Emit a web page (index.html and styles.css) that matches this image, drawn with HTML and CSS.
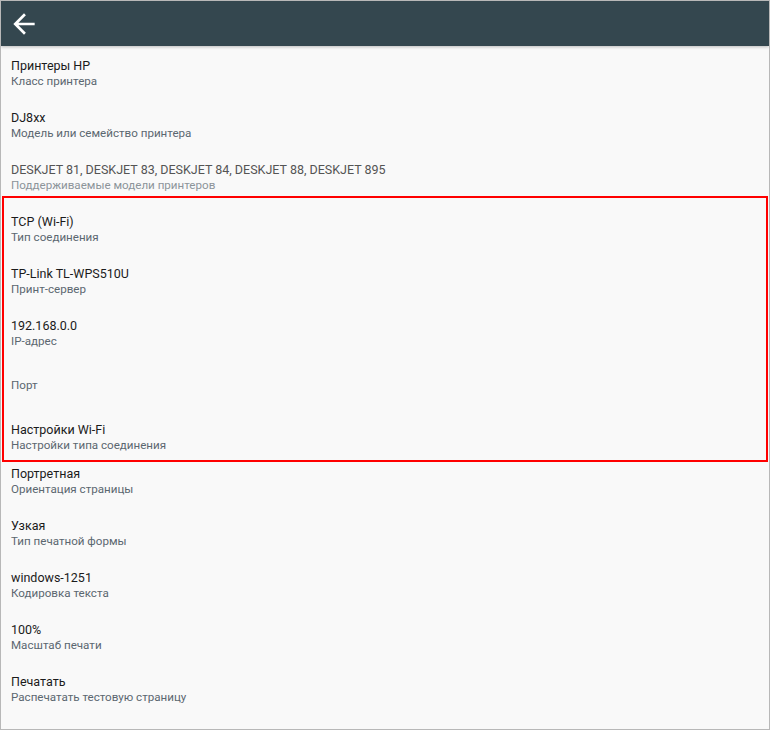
FILE: index.html
```html
<!DOCTYPE html>
<html><head><meta charset="utf-8"><link rel="stylesheet" href="styles.css"></head>
<body>
<div class="frame">
  <header class="bar">
    <svg class="back" viewBox="0 0 24 24"><path d="M20 11H7.83l5.59-5.59L12 4l-8 8 8 8 1.41-1.41L7.83 13H20v-2z" fill="#fff"/></svg>
  </header>
  <div class="list">
    <div class="row"><div class="t">Принтеры HP</div><div class="s">Класс принтера</div></div>
    <div class="row"><div class="t">DJ8xx</div><div class="s">Модель или семейство принтера</div></div>
    <div class="row dis"><div class="t">DESKJET 81, DESKJET 83, DESKJET 84, DESKJET 88, DESKJET 895</div><div class="s">Поддерживаемые модели принтеров</div></div>
    <div class="group">
      <div class="row"><div class="t">TCP (Wi-Fi)</div><div class="s">Тип соединения</div></div>
      <div class="row"><div class="t">TP-Link TL-WPS510U</div><div class="s">Принт-сервер</div></div>
      <div class="row"><div class="t">192.168.0.0</div><div class="s">IP-адрес</div></div>
      <div class="row"><div class="s">Порт</div></div>
      <div class="row last"><div class="t">Настройки Wi-Fi</div><div class="s">Настройки типа соединения</div></div>
    </div>
    <div class="row"><div class="t">Портретная</div><div class="s">Ориентация страницы</div></div>
    <div class="row"><div class="t">Узкая</div><div class="s">Тип печатной формы</div></div>
    <div class="row"><div class="t">windows-1251</div><div class="s">Кодировка текста</div></div>
    <div class="row"><div class="t">100%</div><div class="s">Масштаб печати</div></div>
    <div class="row"><div class="t">Печатать</div><div class="s">Распечатать тестовую страницу</div></div>
  </div>
</div>
</body></html>
```
FILE: styles.css
```css
html, body { margin: 0; padding: 0; }
body { font-family: Roboto, "Noto Sans", sans-serif; background: #fff; }
.frame {
  width: 770px; height: 730px; box-sizing: border-box;
  border: 1px solid #b8b8b8; background: #f9f9f9;
  display: flex; flex-direction: column; overflow: hidden;
}
.bar {
  height: 45px; flex: none; background: #34474f;
  display: flex; align-items: center; padding-left: 7px;
  box-shadow: 0 1px 3px rgba(0,0,0,0.25); position: relative; z-index: 1;
}
.back { width: 32px; height: 32px; }
.list { display: flex; flex-direction: column; padding-top: 1px; }
.row {
  height: 52px; box-sizing: border-box; padding: 0 10px;
  display: flex; flex-direction: column; justify-content: center;
}
.t { font-size: 12.5px; color: #1b1b1b; line-height: 17px; }
.s { font-size: 11.6px; color: #5b6770; line-height: 15px; }
.dis .t { color: #545454; }
.dis .s { color: #8c9499; }
.group {
  border: 2px solid #f00; margin: -7px 1px -7px 1px; padding-top: 5px;
}
.group .row { padding-left: 7px; }
.group .row.last { height: 49px; justify-content: flex-start; padding-top: 10px; }
.list > .row:last-child { }
```
